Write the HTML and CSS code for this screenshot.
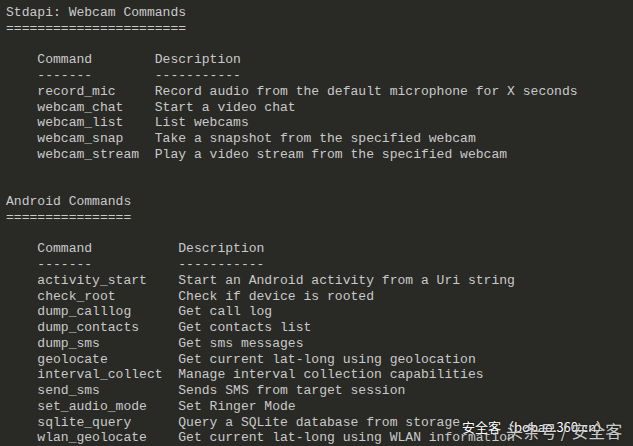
FILE: index.html
```html
<!DOCTYPE html>
<html>
<head>
<meta charset="utf-8">
<link rel="stylesheet" href="styles.css">
</head>
<body>
<main class="term">
<pre class="out">Stdapi: Webcam Commands
=======================

    Command        Description
    -------        -----------
    record_mic     Record audio from the default microphone for X seconds
    webcam_chat    Start a video chat
    webcam_list    List webcams
    webcam_snap    Take a snapshot from the specified webcam
    webcam_stream  Play a video stream from the specified webcam


Android Commands
================

    Command           Description
    -------           -----------
    activity_start    Start an Android activity from a Uri string
    check_root        Check if device is rooted
    dump_calllog      Get call log
    dump_contacts     Get contacts list
    dump_sms          Get sms messages
    geolocate         Get current lat-long using geolocation
    interval_collect  Manage interval collection capabilities
    send_sms          Sends SMS from target session
    set_audio_mode    Set Ringer Mode
    sqlite_query      Query a SQLite database from storage
    wlan_geolocate    Get current lat-long using WLAN information</pre>
<div class="wm wm-small">安全客（bobao.360.cn）</div>
<div class="wm wm-big">头条号 / 安全客</div>
</main>
</body>
</html>
```
FILE: styles.css
```css
html, body {
  margin: 0;
  padding: 0;
  background: #292925;
}
.term {
  position: relative;
  width: 633px;
  height: 446px;
  overflow: hidden;
  background: #292925;
}
.out {
  margin: 0;
  padding: 5px 0 0 6px;
  font-family: "Liberation Mono", "DejaVu Sans Mono", monospace;
  font-size: 13.05px;
  line-height: 15.75px;
  color: #cacaca;
}
.wm {
  position: absolute;
  white-space: nowrap;
  font-family: "Noto Sans CJK SC", "Noto Sans", sans-serif;
  color: #ffffff;
}
.wm-small {
  left: 462px;
  top: 418px;
  font-size: 13px;
  line-height: 18px;
  text-shadow: 0 0 2px rgba(0,0,0,0.8);
}
.wm-big {
  left: 506px;
  top: 419px;
  font-size: 17px;
  line-height: 24px;
  color: rgba(235,235,235,0.85);
  text-shadow: 0 0 2px rgba(0,0,0,0.5);
}
```
